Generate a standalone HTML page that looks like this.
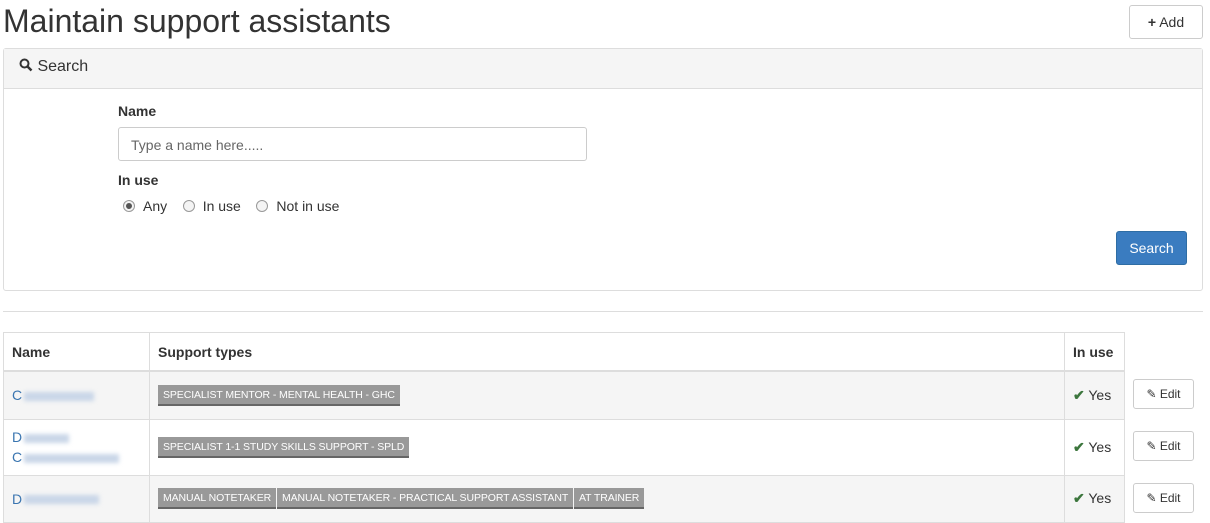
<!DOCTYPE html>
<html><head><style>
body{margin:0;font-family:"Liberation Sans",sans-serif;font-size:13px;color:#333;background:#fff;width:1210px;height:523px;overflow:hidden;position:relative}
.a{position:absolute}
h1{position:absolute;left:3px;top:3px;margin:0;font-weight:normal;font-size:32px;color:#333}
.btn{position:absolute;border:1px solid #ccc;border-radius:3px;background:#fff;box-sizing:border-box;text-align:center;color:#333}
.panel{left:3px;top:48px;width:1200px;height:243px;border:1px solid #ddd;border-radius:3px;box-sizing:border-box}
.ph{height:39px;background:#f5f5f5;border-bottom:1px solid #ddd}
table{position:absolute;left:3px;top:332px;border-collapse:collapse;width:1122px}
td,th{border:1px solid #ddd;text-align:left;padding:0 8px;font-size:14px}
th{height:37px;border-bottom:2px solid #ddd}
tr.g td{background:#f5f5f5}
.lab{display:inline-block;background:#999;color:#fff;font-size:10.5px;padding:4px 5px 3px;border-bottom:2px solid #666;letter-spacing:-0.1px}
.nm{color:#3a75b0}
td.n{line-height:20px}
.bl{display:inline-block;background:#c9d6e8;filter:blur(2px);height:9px;vertical-align:middle;margin-left:2px}
.yes{font-size:14px}.yes b{color:#3c763d}
.radio{display:inline-block;width:10px;height:10px;border:1px solid #999;border-radius:50%;vertical-align:-1px;margin-right:8px;position:relative;background:#f4f4f4}
</style></head><body>
<h1>Maintain support assistants</h1>
<div class="btn" style="left:1129px;top:5px;width:74px;height:34px;line-height:32px;font-size:14px"><b>+</b> Add</div>
<div class="a panel"><div class="ph"></div></div>
<div class="a" style="left:19px;top:58px;font-size:16px">
<svg width="14" height="14" viewBox="0 0 14 14" style="vertical-align:-1px"><circle cx="5.5" cy="5.5" r="4" fill="none" stroke="#333" stroke-width="2"/><path d="M8.5 8.5 L12.5 12.5" stroke="#333" stroke-width="2.5"/></svg> Search</div>
<div class="a" style="left:118px;top:103px;font-weight:bold;font-size:14px">Name</div>
<div class="a" style="left:118px;top:127px;width:469px;height:34px;border:1px solid #ccc;border-radius:3px;box-sizing:border-box;padding:9px 12px;color:#666;font-size:14px">Type a name here.....</div>
<div class="a" style="left:118px;top:172px;font-weight:bold;font-size:14px">In use</div>
<div class="a" style="left:123px;top:198px;font-size:14px"><span class="radio"><span style="position:absolute;left:2px;top:2px;width:6px;height:6px;border-radius:50%;background:#555"></span></span>Any &nbsp;&nbsp;&nbsp;<span class="radio"></span>In use &nbsp;&nbsp;&nbsp;<span class="radio"></span>Not in use</div>
<div class="btn" style="left:1116px;top:231px;width:71px;height:34px;line-height:32px;background:#3a7cc0;border-color:#2e6da4;color:#fff;font-size:14px">Search</div>
<div class="a" style="left:3px;top:311px;width:1200px;border-top:1px solid #ddd"></div>
<table>
<tr><th style="width:129px">Name</th><th>Support types</th><th style="width:43px">In use</th></tr>
<tr class="g" style="height:48px"><td class="n"><span class="nm">C</span><span class="bl" style="width:70px"></span></td><td><span class="lab">SPECIALIST MENTOR - MENTAL HEALTH - GHC</span></td><td class="yes"><b>✔</b> Yes</td></tr>
<tr style="height:56px"><td class="n"><span class="nm">D</span><span class="bl" style="width:45px"></span><br><span class="nm">C</span><span class="bl" style="width:95px"></span></td><td><span class="lab">SPECIALIST 1-1 STUDY SKILLS SUPPORT - SPLD</span></td><td class="yes"><b>✔</b> Yes</td></tr>
<tr class="g" style="height:47px"><td class="n"><span class="nm">D</span><span class="bl" style="width:75px"></span></td><td><span class="lab">MANUAL NOTETAKER</span> <span class="lab" style="margin-left:-3px">MANUAL NOTETAKER - PRACTICAL SUPPORT ASSISTANT</span> <span class="lab" style="margin-left:-3px">AT TRAINER</span></td><td class="yes"><b>✔</b> Yes</td></tr>
</table>
<div class="btn" style="left:1133px;top:379px;width:61px;height:30px;line-height:28px;font-size:12px">✎ Edit</div>
<div class="btn" style="left:1133px;top:431px;width:61px;height:30px;line-height:28px;font-size:12px">✎ Edit</div>
<div class="btn" style="left:1133px;top:483px;width:61px;height:30px;line-height:28px;font-size:12px">✎ Edit</div>
</body></html>
